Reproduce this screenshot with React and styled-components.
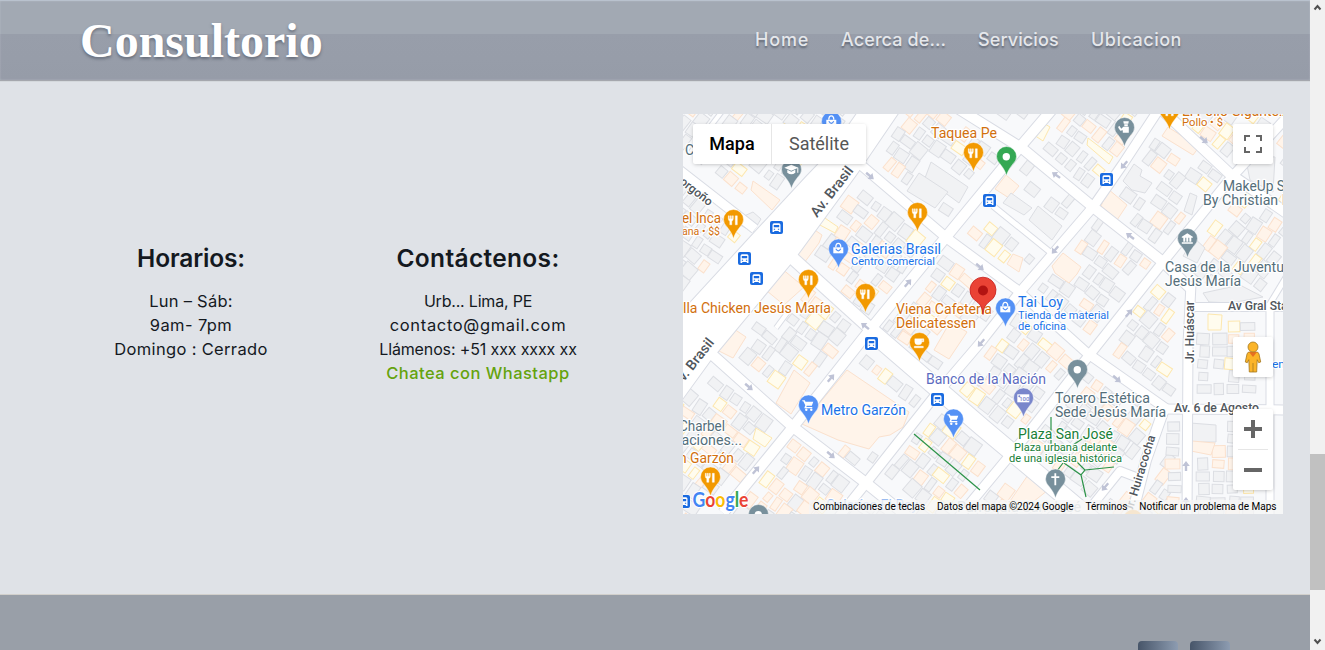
import React from 'react';
import styled, { createGlobalStyle } from 'styled-components';

const Global = createGlobalStyle`
  * { box-sizing: border-box; }
  body { margin: 0; overflow: hidden; font-family: Inter, "Open Sans", sans-serif; background: #dfe2e7; }
  a { color: inherit; text-decoration: none; }
`;
const Shell = styled.div`display: flex; width: 1325px; height: 650px; overflow: hidden;`;
const Page = styled.div`width: 1310px; display: flex; flex-direction: column; background: #dfe2e7;`;
const Header = styled.header`
  height: 80px; flex: none; display: flex; justify-content: space-between; align-items: center;
  padding: 0 128px 0 80px;
  background: linear-gradient(#a2a9b3 33px, #989eaa 33px, #969ca8);
  border-top: 1px solid #b9c2ce;
  box-shadow: inset 0 0 2px rgba(220,225,232,.4), 0 1px 1px rgba(140,142,148,.7);
`;
const Logo = styled.a`
  font: bold 48px/56px "Liberation Serif", serif; color: #fff;
  text-shadow: 0 2px 3px rgba(60,68,82,.55);
`;
const Nav = styled.nav`display: flex; gap: 32px;`;
const NavLink = styled.a`
  width: ${p => p.$w}px; white-space: nowrap; font-size: 18px; font-weight: 500; line-height: 27px;
  letter-spacing: ${p => p.$track}px; color: #e5e7eb; margin-top: -2px;
  text-shadow: 0 2px 2px rgba(60,66,80,.6);
`;
const Section = styled.main`height: 514px; flex: none; display: flex; padding: 34px 27px 0 51px; justify-content: space-between;`;
const Info = styled.div`display: flex; padding-top: 124px;`;
const Column = styled.div`
  width: ${p => p.$w}px; text-align: center; color: #14191f; font-size: 16px; line-height: 24px;
`;
const Title = styled.h2`
  margin: 0 0 11px; font-size: 24.5px; line-height: 40px; font-weight: 600; letter-spacing: ${p => p.$track}px;
`;
const Line = styled.div`font-size: ${p => p.$size || 16}px; letter-spacing: ${p => p.$track || 0}px; white-space: nowrap;`;
const Chat = styled.a`color: #65a30d; font-size: 16.5px; font-weight: 500; letter-spacing: ${p => p.$track}px;`;
const Footer = styled.footer`
  flex: 1; background: #999fa8; border-top: 1px solid #d2d0cc; display: flex; gap: 12px;
  justify-content: flex-end; padding: 46px 80px 0 0;
`;
const Social = styled.span`width: 40px; height: 40px; flex: none; border-radius: 4px; background: linear-gradient(90deg, #475569, #94a3b8 110%);`;

const Scroll = styled.div`
  width: 15px; background: #f1f1f1; display: flex; flex-direction: column; align-items: center; padding: 4px 0 5px;
`;
const Thumb = styled.div`width: 15px; height: 136px; margin: 443px 0 auto; background: #c1c1c1;`;

const MapBox = styled.div`position: relative; width: 600px; height: 400px; overflow: hidden; background: #f8f9fb; font-family: Roboto, sans-serif;`;
const Overlay = styled.div`position: absolute; ${p => p.$at}`;
const Panel = styled.div`
  display: flex; flex-direction: ${p => (p.$col ? 'column' : 'row')}; align-items: center; justify-content: center;
  width: ${p => p.$w}px; height: ${p => p.$h}px; background: #fff; border-radius: 2px;
  box-shadow: 0 1px 4px -1px rgba(0,0,0,.3);
`;
const TypeButton = styled.div`
  width: ${p => p.$w}px; line-height: 40px; text-align: center; font-size: 18px; height: 40px;
  font-weight: ${p => (p.$on ? 500 : 400)}; color: ${p => (p.$on ? '#000' : '#565656')};
  border-left: ${p => (p.$on ? 0 : 1)}px solid #e6e6e6;
`;
const ZoomButton = styled.div`width: 40px; height: 40px; display: flex; align-items: center; justify-content: center;`;
const Rule = styled.div`width: 30px; height: 1px; background: #e6e6e6;`;
const Attribution = styled.div`
  display: flex; gap: 12px; height: 14px; align-items: center; justify-content: flex-end; padding: 0 6.5px 0 4px;
  background: rgba(245,245,245,.75); font-size: 10px; line-height: 14px; color: #000; white-space: nowrap;
`;

/* streets: [width, x1, y1, x2, y2, ...] */
const roads = [
  [9, -5, 55, 72, 115],
  [12, 105, 140, 190, 217], [17, 184, 214, 300, 314, 412, 408],
  [10, 24, 236, 110, 313, 183, 369, 225, 403],
  [9, 165, 40, 265, 125, 333, 175, 404, 239, 485, 296],
  [10, 276, -5, 340, 35, 410, 93, 480, 148, 507, 174],
  [10, 478, -5, 547, 60, 605, 100],
  [5, 310, 92, 367, 138],
  [10, 372, -8, 337, 33, 263, 123, 182, 222, 110, 313, 40, 399],
  [9, 478, -8, 440, 50, 410, 93, 337, 178, 297, 229, 251, 283, 183, 369, 155, 404],
  [9, 605, 2, 548, 64, 480, 148, 404, 244, 343, 322, 275, 404],
  [9, 508, 170, 505, 230, 504, 405], [7, 587, 193, 587, 405],
  [9, 478, 295, 605, 296], [8, 505, 193, 605, 193], [5, 585, 193, 605, 160],
  [10, 481, 295, 463, 346, 448, 405], [8, 400, 403, 437, 357, 458, 365],
  [4, 93, 214, 107, 195], [4, 40, -4, 8, 38],
];
const avenue = '177,-5 147,38 123,63 72,118 -5,202 -5,291 27,247 110,147 173,61 218,-5';
const toPath = r => 'M' + r.slice(1).reduce((s, v, i) => s + (i % 2 ? ',' : ' ') + v, '');
const segDist = (x, y, a, b, c, d) => {
  const l = (c - a) ** 2 + (d - b) ** 2;
  const t = Math.max(0, Math.min(1, ((x - a) * (c - a) + (y - b) * (d - b)) / l));
  return Math.hypot(x - a - t * (c - a), y - b - t * (d - b));
};
const clearance = (x, y) => {
  let m = segDist(x, y, 198, -5, 150, 60) - 19;
  m = Math.min(m, segDist(x, y, 150, 60, 91, 132) - 23);
  m = Math.min(m, segDist(x, y, 91, 132, -5, 246) - 29);
  roads.forEach(r => {
    for (let i = 1; i + 3 < r.length; i += 2) m = Math.min(m, segDist(x, y, r[i], r[i + 1], r[i + 2], r[i + 3]) - r[0] / 2);
  });
  return m;
};
const tones = { g: ['#f1f2f4', '#dcdee3'], o: ['#fff4ea', '#fbe1cd'], y: ['#fffcee', '#fde7ae'] };
const landmarks = [
  ['o', '164,256 226,298 220,313 207,321 196,323 186,335 155,326 119,310'],
  ['o', '42,208 54,217 63,223 58,231 50,244 30,234'],
  ['o', '98,154 121,173 101,191 84,177'],
  ['o', '126,112 139,121 136,129 121,149 110,141'],
  ['g', '248,48 285,73 276,89 242,64'], ['g', '236,59 265,78 252,94 224,77'],
  ['o', '323,61 336,72 326,84 312,75'], ['g', '355,92 379,112 369,126 346,106'],
  ['g', '328,79 349,94 341,101 320,89'], ['o', '111,256 127,269 108,300 93,289'],
  ['o', '425,75 444,91 434,106 418,92'], ['g', '451,50 459,56 457,62 469,69 462,79 449,76 440,67'],
  ['g', '511,124 522,134 514,149 500,142'], ['g', '507,309 533,311 533,328 507,328'],
  ['o', '509,327 532,329 528,341 508,337'], ['g', '70,98 78,105 70,118 50,107'],
  ['o', '380,139 398,153 394,160 386,169 372,159 369,152'],
  ['o', '267,208 284,218 266,245 251,236'], ['o', '345,361 365,376 345,392 325,390'],
  ['o', '485,13 516,33 510,41 479,22'], ['g', '507,79 514,82 509,101 501,97'],
  ['y', '357,7 367,13 360,27 351,21'], ['y', '405,24 430,43 426,50 404,31'],
  ['y', '73,314 89,324 82,333 70,325'], ['g', '562,41 592,43 590,78 567,66'],
  ['g', '520,179 557,171 580,183 548,189 526,188'],
  ['o', '70,67 97,86 89,96 68,76'], ['y', '136,100 155,113 152,119 135,110'],
  ['y', '525,200 539,201 538,216 525,216'], ['o', '340,144 336,158 324,150 330,140'],
];
const buildings = (() => {
  let seed = 4211;
  const rnd = () => ((seed = (seed * 16807) % 2147483647) / 2147483647);
  const boxes = landmarks.map(([, s]) => s.split(' ').map(q => q.split(',').map(Number)));
  const inside = (x, y) => boxes.some(p => {
    let hit = false;
    for (let i = 0, j = p.length - 1; i < p.length; j = i++) {
      if (segDist(x, y, p[i][0], p[i][1], p[j][0], p[j][1]) < 6) return true;
      if ((p[i][1] > y) !== (p[j][1] > y) && x < ((p[j][0] - p[i][0]) * (y - p[i][1])) / (p[j][1] - p[i][1]) + p[i][0]) hit = !hit;
    }
    return hit;
  });
  const out = [];
  const a = 39 * Math.PI / 180, c = Math.cos(a), s = Math.sin(a);
  const add = (x, y, w, h, ang) => {
    if (x < -8 || x > 608 || y < -8 || y > 408 || clearance(x, y) < Math.min(w, h) * .6 + 1 || inside(x, y)) return;
    const k = rnd();
    if (k > .96) return;
    const warm = x < 330 && y > 130 ? .57 : .7;
    out.push([k < warm ? 'g' : k < .87 ? 'o' : 'y', x, y, w, h, ang + rnd() * 8 - 4]);
  };
  for (let v = -400; v < 400; v += 14) {
    for (let u = -20; u < 760;) {
      const w = 6 + rnd() * 8, h = 8 + rnd() * 7;
      const x = u * c - v * s, y = u * s + v * c;
      if (!(x > 488 && y > 185)) add(x, y + rnd() * 2, w, h, 37);
      u += w * .5 + 7.5;
    }
  }
  for (let x = 474; x < 605; x += 15) for (let y = 200; y < 405; y += 12.5) if (x > 489 - Math.max(0, y - 300) / 8) add(x + rnd() * 3, y, 9 + rnd() * 6, 7 + rnd() * 5, 2);
  return out;
})();

const arrows = [[187, 62, 40], [373, 61, 215], [225, 169, -50], [297, 153, 40], [372, 136, 130], [521, 26, 40], [441, 51, 130], [447, 122, 217], [148, 264, -50], [66, 273, 40], [73, 356, -50], [148, 341, 40], [182, 212, 218], [298, 229, 130], [446, 199, -50], [434, 265, 40], [422, 373, 130], [503, 352, -90], [503, 388, -90]];

const glyphs = {
  food: <path d="M-5-4v3q0 2 1.500 2.300V5h2V1.300Q0 1 0-1V-4h-1v3h-1v-3h-1v3h-1v-3zM2-4V5h2V-4Q1.500-4 2-4z" fill="#fff" stroke="#fff" strokeWidth=".4" />,
  cafe: <path d="M-4.500-4h9v3h-2q0 3-3 3h-1q-3 0-3-3zM2.500-3v1h1v-1zM-5 3.500H4V5h-9z" fill="#fff" stroke="#fff" strokeWidth=".4" fillRule="evenodd" />,
  bag: <g fill="#fff"><path d="M-5-2H5V4H-5z" /><path d="M-2.500-2q0-4 2.500-4t2.500 4" fill="none" stroke="#fff" strokeWidth="1.300" /><path d="M-2.500-.5q2.500 4 5 0" fill="none" stroke="#5491f5" strokeWidth="1.200" /></g>,
  cart: <g fill="#fff"><path d="M-6-5h2.500l.7 1.500H5L3.500.5h-5L-2 1.700h6V3h-8l1-3-2-4h-1z" /><circle cx="-2" cy="4.500" r="1.200" /><circle cx="3" cy="4.500" r="1.200" /></g>,
  cap: <g fill="#fff"><path d="M-7-2 0-5 7-2 0 1zM-4 0v3q4 3 8 0V0L0 2z" /><path d="M6-2h1v5H6z" /></g>,
  museum: <path d="M-5.500-2 0-5.500 5.500-2v1h-11zM-4-1h2v4h-2zM-1-1h2v4h-2zM2-1h2v4H2zM-5.500 3.500h11V5h-11z" fill="#fff" />,
  officer: <path d="M-1-6.500h5.500L4-4h-4.500zM0-3.500h3.500v2H0zM-6-1l1-1 2 3 2-2h5.500v6h-6V2.500L-4 3-6 0zM-3-1.500l3 1z" fill="#fff" />,
  cross: <path d="M-.9-6H.9v3H4v1.700H.9V6H-.9v-7.300H-4V-3h3.100z" fill="#fff" />,
  dot: <circle r="3.700" fill="#fff" />,
  bank: <g><path d="M-6-4H6V4H-6z" fill="#fff" /><text x="1" y="3" fontSize="6" fontWeight="500" textAnchor="middle" fill="#7986cb">100</text><circle cx="-4" cy="-2" r="1" fill="#7986cb" /></g>,
};
const O = '#f29900', B = '#5491f5', S = '#78909c';
const pins = [
  [50.5, 124, O, 'food'], [125.5, 184, O, 'food'], [182.5, 198, O, 'food'], [290.5, 57, O, 'food'], [234.5, 117, O, 'food'],
  [27.5, 381.5, O, 'food'], [486.5, 15, O, 'food'], [236.5, 247, O, 'cafe'],
  [108.5, 74, S, 'cap'], [441.5, 32, S, 'officer'], [504.5, 143, S, 'museum'], [394.5, 274, S, 'dot'], [372.5, 383.5, S, 'cross'], [75.5, 419, S, 'dot'],
  [148.5, 26, B, 'bag'], [155.5, 153.5, B, 'bag'], [125.5, 309.5, B, 'cart'], [270.5, 323.5, B, 'cart'], [322.5, 212.5, B, 'bag'],
  [323.5, 61, '#34a853', 'dot'], [340.5, 302.5, '#7986cb', 'bank'], [450, 424, '#f6b65b', 'dot'],
];
const Pin = ({ x, y, color, kind }) => (
  <g transform={`translate(${x} ${y + 0.5})`}>
    <path d="M0 0C-1.500-5-3-7-6-11Q-10-15-10-19A10 10 0 0 1 10-19Q10-15 6-11C3-7 1.500-5 0 0Z" fill={color} stroke="#fff" strokeOpacity=".7" strokeWidth=".6" />
    <g transform="translate(-.2 -18.700)">{glyphs[kind]}</g>
  </g>
);
const Bus = ({ x, y }) => (
  <g transform={`translate(${x} ${y})`}>
    <rect x="-7" y="-7" width="14" height="14" rx="2.500" fill="#fff" /><rect x="-6.500" y="-6.500" width="13" height="13" rx="2" fill="#1a6be0" />
    <path d="M-4 4.500V-2.500Q-4-4.300-2.500-4.300h5Q4-4.300 4-2.500V4.500H2.300V3.500h-4.600V4.500z" fill="#fff" /><path d="M-2.700-2.500h5.400v2.300h-5.400zM-2.700 1.200h1.300v1h-1.300zM1.400 1.200h1.300v1H1.400z" fill="#1a6be0" />
  </g>
);

const FOOD = '#d2700e', SHOP = '#1a73e8', CIVIC = '#546e7a', PARK = '#188038', ROAD = '#50565c';
/* labels: text, x, baseline, size, colour, drawn length, rotation */
const labels = [
  ['Taquea Pe', 248, 24, 14, FOOD, 66], ['El Pollo Gigante…', 499, 2, 14, FOOD, 106], ['Pollo • $', 499, 12, 11, FOOD, 41],
  ['el Inca', -1, 109, 14, FOOD, 39], ['ana • $$', -1, 121, 11, FOOD, 38],
  ['lla Chicken Jesús María', 0, 199, 14, FOOD, 148], ['Viena Cafetería', 213, 200, 14, FOOD, 96], ['Delicatessen', 213, 214, 14, FOOD, 80],
  ['n Garzón', -4, 349, 14, FOOD, 55],
  ['Galerias Brasil', 168, 140, 14, SHOP, 90], ['Centro comercial', 168, 151, 11, SHOP, 84],
  ['Tai Loy', 335, 193, 14, SHOP, 45], ['Tienda de material', 335, 205, 11, SHOP, 91], ['de oficina', 335, 216, 11, SHOP, 48],
  ['Metro Garzón', 138, 301, 14, SHOP, 85], ['en', 589, 254, 11, SHOP, 13], ['Galerías El Rey', 143, 396, 14, '#9bbcf0', 92],
  ['MakeUp S', 540, 77, 14, CIVIC, 62], ['By Christian M', 520, 91, 14, CIVIC, 91], ['Casa de la Juventud', 482, 158, 14, CIVIC, 127], ['Jesús María', 482, 172, 14, CIVIC, 76],
  ['Torero Estética', 372, 289, 14, CIVIC, 95], ['Sede Jesús María', 372, 303, 14, CIVIC, 111],
  ['Charbel', -4, 317, 14, CIVIC, 46], ['caciones...', -9, 331, 14, CIVIC, 68], ['C', 2, 41, 14, CIVIC, 9],
  ['Parroquia San José', 274, 398, 14, '#b4bec3', 124],
  ['Banco de la Nación', 243, 270, 14, '#5c6bc0', 120],
  ['Plaza San José', 335, 325, 14, PARK, 95], ['Plaza urbana delante', 331, 337, 11, PARK, 103], ['de una iglesia histórica', 326, 348, 11, PARK, 113],
  ['Av. Brasil', 134, 104, 14, ROAD, 60, -52], ['v. Brasil', 1, 268, 14, ROAD, 50, -52], ['orgoño', -4, 69, 12, ROAD, 38, 38],
  ['Jr. Huáscar', 511, 249, 12, ROAD, 62, -90], ['Jr. Huiracocha', 449, 399, 12, ROAD, 80, -73],
  ['Av. 6 de Agosto', 491, 298, 12, ROAD, 85], ['Av Gral Sta. Cruz', 545, 196, 12, ROAD, 91],
];
const Label = ({ d: [t, x, y, size, color, len, rot] }) => (
  <text x={x} y={y} fontSize={size} fill={color} textLength={len} lengthAdjust="spacingAndGlyphs" fontWeight={color === ROAD ? 500 : 400}
    stroke="#fff" strokeWidth="2.500" strokeLinejoin="round" paintOrder="stroke" transform={rot ? `rotate(${rot} ${x} ${y})` : undefined}>{t}</text>
);

const MapCanvas = () => (
  <svg width="600" height="400" viewBox="0 0 600 400" display="block">
    <rect width="600" height="400" fill="#f8f9fb" />
    {buildings.map(([k, x, y, w, h, r], i) => (
      <rect key={i} x={-w / 2} y={-h / 2} width={w} height={h} transform={`translate(${x} ${y}) rotate(${r})`} fill={tones[k][0]} stroke={tones[k][1]} />
    ))}
    {landmarks.map(([k, pts], i) => <polygon key={i} points={pts} fill={tones[k][0]} stroke={tones[k][1]} />)}
    <polygon points={avenue} fill="#fff" stroke="#d9dce4" strokeWidth="2" />
    {roads.map((r, i) => <path key={i} d={toPath(r)} fill="none" stroke="#d9dce4" strokeWidth={r[0] + 2} strokeLinejoin="round" />)}
    <polygon points={avenue} fill="#fff" />
    {roads.map((r, i) => <path key={i} d={toPath(r)} fill="none" stroke="#fff" strokeWidth={r[0]} strokeLinejoin="round" />)}
    {arrows.map(([x, y, r], i) => (
      <path key={i} d="M-5-1.200H0V-3.800L5 0 0 3.800V1.200H-5Z" transform={`translate(${x} ${y}) rotate(${r})`} fill="#bfc3d6" />
    ))}
    <g fill="none" stroke="#2b9348" strokeWidth="1.200">
      <path d="M231 320 297 376" /><path d="M368 303V338M381 349 398 361M402 356 431 353M393 347 402 356 398 361 403 383M380 349 374 357M390 331 399 325" />
    </g>
    {[[93.5, 113.5], [61.5, 144.5], [73.5, 164.5], [306.5, 86.5], [423.5, 65.5], [188.5, 229.5], [254.5, 285.5], [0.5, 387.5]].map(([x, y]) => <Bus key={x} x={x} y={y} />)}
    {labels.map((d, i) => <Label key={i} d={d} />)}
    {pins.map(([x, y, c, k], i) => <Pin key={i} x={x} y={y} color={c} kind={k} />)}
    <path d="M300 200.500C299 190 295 189 290 184.500A13 13 0 1 1 310 184.500C305 189 301 190 300 200.500Z" fill="#ea4335" stroke="#c5221f" strokeWidth=".8" />
    <circle cx="300" cy="176.500" r="5" fill="#b31412" />
    <text x="9.500" y="393" fontSize="20" fontFamily="Lato, sans-serif" fontWeight="700" textLength="56" lengthAdjust="spacingAndGlyphs" stroke="#fff" strokeWidth="2" paintOrder="stroke">
      <tspan fill="#4285f4">G</tspan><tspan fill="#ea4335">o</tspan><tspan fill="#fbbc04">o</tspan><tspan fill="#4285f4">g</tspan><tspan fill="#34a853">l</tspan><tspan fill="#ea4335">e</tspan>
    </text>
  </svg>
);

const Icon = ({ d }) => <svg width="18" height="18" viewBox="0 0 18 18"><path d={d} fill="#666" /></svg>;
const Pegman = () => (
  <svg width="18" height="32" viewBox="0 0 18 32">
    <path d="M5.500 11h7q2 0 2.500 2l1.700 8-2 .7-1.500-3-.5 12.300H5.300l-.5-12.300-1.500 3-2-.7L3 13q.5-2 2.500-2z" fill="#fbb428" stroke="#a5791f" strokeWidth=".8" />
    <path d="M5 11h8l-4 5z" fill="#e66f21" /><path d="M9 22v9" stroke="#a5791f" strokeWidth=".8" />
    <circle cx="9" cy="6" r="5" fill="#fbb428" stroke="#a5791f" strokeWidth=".8" />
  </svg>
);
const Chevron = ({ up }) => (
  <svg width="9" height="7" viewBox="0 0 9 7"><path d={up ? 'M1.500 5.500 4.500 2 7.500 5.500' : 'M1.500 1.500 4.500 5 7.500 1.500'} fill="none" stroke="#505050" strokeWidth="2" /></svg>
);

const MapView = () => (
  <MapBox>
    <MapCanvas />
    <Overlay $at="left: 10px; top: 10px;">
      <Panel $w={173} $h={40}><TypeButton $w={78} $on>Mapa</TypeButton><TypeButton $w={95}>Satélite</TypeButton></Panel>
    </Overlay>
    <Overlay $at="right: 10px; top: 10px;">
      <Panel $w={40} $h={40}><Icon d="M0 0h6v2H2v4H0zM12 0h6v6h-2V2h-4zM0 12h2v4h4v2H0zM16 12h2v6h-6v-2h4z" /></Panel>
    </Overlay>
    <Overlay $at="right: 10px; top: 223px;"><Panel $w={40} $h={40}><Pegman /></Panel></Overlay>
    <Overlay $at="right: 10px; top: 295px;">
      <Panel $w={40} $h={81} $col>
        <ZoomButton><Icon d="M7 0h4v7h7v4h-7v7H7v-7H0V7h7z" /></ZoomButton><Rule /><ZoomButton><Icon d="M0 7h18v4H0z" /></ZoomButton>
      </Panel>
    </Overlay>
    <Overlay $at="right: 0; bottom: 0;">
      <Attribution><span>Combinaciones de teclas</span><span>Datos del mapa ©2024 Google</span><span>Términos</span><span>Notificar un problema de Maps</span></Attribution>
    </Overlay>
  </MapBox>
);

export default function App() {
  return (
    <Shell>
      <Global />
      <Page>
        <Header>
          <Logo>Consultorio</Logo>
          <Nav>
            <NavLink $w={54} $track={0.8}>Home</NavLink>
            <NavLink $w={105} $track={0.1}>Acerca de...</NavLink>
            <NavLink $w={81} $track={0.1}>Servicios</NavLink>
            <NavLink $w={91} $track={0.5}>Ubicacion</NavLink>
          </Nav>
        </Header>
        <Section>
          <Info>
            <Column $w={280}>
              <Title $track={-0.15}>Horarios:</Title>
              <Line $size={16.5} $track={0.25}>Lun – Sáb:</Line><Line $size={16.5} $track={0.4}>9am- 7pm</Line><Line $size={16.5} $track={0.33}>Domingo : Cerrado</Line>
            </Column>
            <Column $w={294}>
              <Title $track={0.33}>Contáctenos:</Title>
              <Line $track={-0.2}>Urb... Lima, PE</Line><Line $size={16.5} $track={0.66}>contacto@gmail.com</Line><Line $track={-0.13}>Llámenos: +51 xxx xxxx xx</Line>
              <Line><Chat $track={0.47}>Chatea con Whastapp</Chat></Line>
            </Column>
          </Info>
          <MapView />
        </Section>
        <Footer><Social /><Social /></Footer>
      </Page>
      <Scroll><Chevron up /><Thumb /><Chevron /></Scroll>
    </Shell>
  );
}
